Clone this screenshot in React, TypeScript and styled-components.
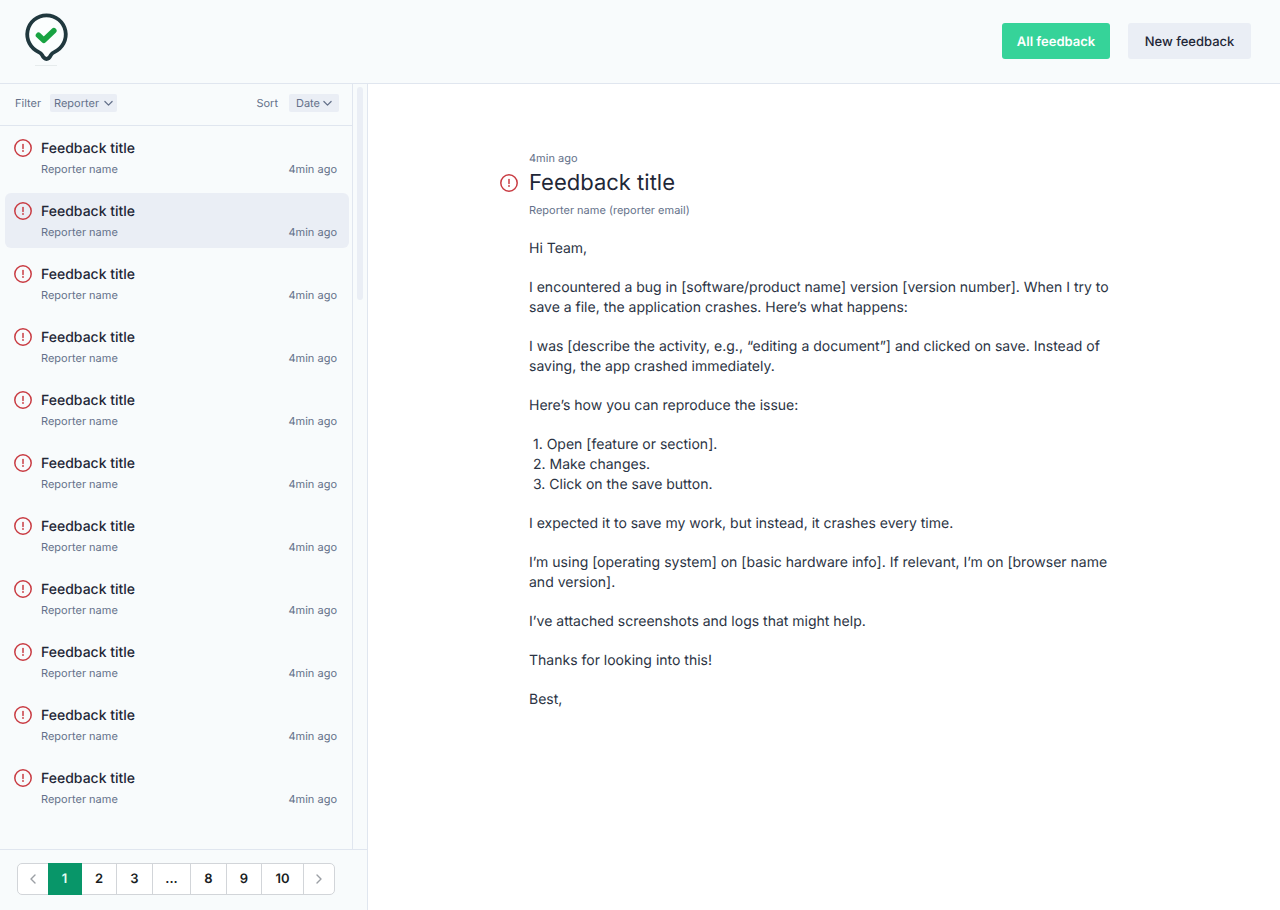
import React, { useState } from "react";
import styled, { createGlobalStyle } from "styled-components";

const color = {
  page: "#ffffff",
  panel: "#f8fbfc",
  line: "#e0e6ef",
  soft: "#eaeef5",
  ink: "#1f2737",
  body: "#2b3444",
  muted: "#64718a",
  green: "#36d399",
  deepGreen: "#089669",
  red: "#c93c43",
};

const GlobalStyle = createGlobalStyle`
  *, *::before, *::after { box-sizing: border-box; }
  body { margin: 0; background: ${color.page}; color: ${color.ink}; font-family: Inter, "Liberation Sans", sans-serif; text-rendering: geometricPrecision; }
  button, select { font-family: inherit; text-rendering: inherit; }
`;

const Page = styled.div`
  display: flex;
  flex-direction: column;
  min-height: 100vh;
`;

const Header = styled.header`
  display: flex;
  align-items: center;
  justify-content: space-between;
  height: 84px;
  padding: 0 29px 2px 16px;
  background: ${color.panel};
  border-bottom: 1px solid ${color.line};
`;

const LogoLink = styled.a`
  display: block;
  height: 60px;
  svg { display: block; }
`;

const HeaderActions = styled.nav`
  display: flex;
  gap: 18px;
`;

const ActionButton = styled.button<{ $primary?: boolean }>`
  height: 36px;
  padding: 2px 0 0;
  border: 0;
  border-radius: 3px;
  font-size: 13px;
  width: ${(p) => (p.$primary ? 108 : 123)}px;
  font-weight: ${(p) => (p.$primary ? 600 : 500)};
  color: ${(p) => (p.$primary ? "#ffffff" : color.ink)};
  background: ${(p) => (p.$primary ? color.green : color.soft)};
  cursor: pointer;
`;

const Workspace = styled.div`
  display: flex;
  flex: 1;
`;

const Sidebar = styled.aside`
  display: flex;
  flex-direction: column;
  flex: 0 0 368px;
  background: ${color.panel};
  border-right: 1px solid ${color.line};
`;

const ListArea = styled.div`
  display: flex;
  flex: 1;
`;

const ListColumn = styled.div`
  flex: 1;
  border-right: 1px solid ${color.line};
`;

const ScrollTrack = styled.div`
  width: 14px;
  padding: 3px 4px;
`;

const ScrollThumb = styled.div`
  height: 213px;
  border-radius: 3px;
  background: ${color.soft};
`;

const FilterBar = styled.div`
  display: flex;
  align-items: center;
  justify-content: space-between;
  height: 42px;
  padding: 0 13px 4px 15px;
  border-bottom: 1px solid ${color.line};
`;

const Field = styled.label<{ $gap: number }>`
  display: flex;
  align-items: center;
  gap: ${(p) => p.$gap}px;
  font-size: 11px;
  color: ${color.muted};
`;

const SelectBox = styled.span<{ $inset: number }>`
  position: relative;
  display: block;
  select { padding: 0 0 0 ${(p) => p.$inset}px; }
  svg {
    position: absolute;
    right: ${(p) => p.$inset}px;
    top: 5px;
    pointer-events: none;
  }
`;

const Select = styled.select<{ $width: number }>`
  display: block;
  appearance: none;
  width: ${(p) => p.$width}px;
  height: 18px;
  border: 0;
  border-radius: 2px;
  background: ${color.soft};
  color: inherit;
  font-size: 11px;
`;

const FeedbackList = styled.ul`
  display: flex;
  flex-direction: column;
  gap: 8px;
  margin: 0;
  padding: 4px 3px 4px 5px;
  list-style: none;
`;

const FeedbackRow = styled.button<{ $selected: boolean }>`
  display: flex;
  align-items: flex-start;
  gap: 9px;
  width: 100%;
  height: 55px;
  padding: 8px 12px 0 9px;
  border: 0;
  border-radius: 6px;
  background: ${(p) => (p.$selected ? color.soft : "transparent")};
  text-align: left;
  cursor: pointer;
  svg { flex: none; margin-top: 1px; }
`;

const RowText = styled.span`
  display: flex;
  flex: 1;
  flex-direction: column;
`;

const RowTitle = styled.span`
  font-size: 14px;
  line-height: 22px;
  font-weight: 500;
  color: ${color.ink};
`;

const RowMeta = styled.span`
  display: flex;
  justify-content: space-between;
  font-size: 11px;
  line-height: 18px;
  color: ${color.muted};
`;

const PagerBar = styled.footer`
  padding: 13px 17px 15px;
  border-top: 1px solid ${color.line};
`;

const Pager = styled.nav`
  display: inline-flex;
  height: 32px;
  border: 1px solid #d2d5d9;
  border-radius: 5px;
  background: ${color.page};
  vertical-align: top;
`;

const PageButton = styled.button<{ $current?: boolean; $width?: number }>`
  display: flex;
  align-items: center;
  justify-content: center;
  width: ${(p) => p.$width ?? 30}px;
  margin: ${(p) => (p.$current ? "-1px 0" : "0")};
  padding: 0;
  border: 0;
  border-right: 1px solid ${(p) => (p.$current ? color.deepGreen : "#d2d5d9")};
  background: ${(p) => (p.$current ? color.deepGreen : "transparent")};
  color: ${(p) => (p.$current ? "#e4fff5" : "#181c22")};
  font-size: 13px;
  font-weight: 600;
  cursor: pointer;
  &:first-child, &:last-child {
    border-right: 0;
    color: #9b9fa5;
  }
`;

const Main = styled.main`
  display: grid;
  grid-template-columns: 29px minmax(0, 590px) 29px;
  flex: 1;
  align-content: start;
  justify-content: center;
  padding: 66px 16px;
`;

const Meta = styled.p`
  grid-column: 2;
  margin: 0;
  font-size: 11px;
  line-height: 16px;
  color: ${color.muted};
`;

const TitleIcon = styled.span`
  grid-column: 1;
  display: flex;
  align-items: center;
`;

const Title = styled.h1`
  margin: 0;
  font-size: 22px;
  line-height: 34px;
  font-weight: 400;
`;

const Reporter = styled(Meta)`
  margin-top: 2px;
`;

const Message = styled.div`
  grid-column: 2;
  display: flex;
  flex-direction: column;
  gap: 19px;
  margin-top: 21px;
  font-size: 14px;
  line-height: 20px;
  color: ${color.body};
  p, ol { margin: 0; }
  ol { padding-left: 4px; list-style: none; }
`;

const Logo = () => (
  <svg width="60" height="60" viewBox="0 0 60 60" aria-hidden="true">
    <path
      d="M30.500 4.300a19.200 19.200 0 0 0-7.500 36.900c1.700.6 2.300 1.300 3 2.700.9 1.900 2.500 4.100 4.500 4.100s3.600-2.200 4.500-4.100c.7-1.400 1.300-2.100 3-2.700A19.200 19.200 0 0 0 30.500 4.300Z"
      fill="#fbfefe"
      stroke="#20383e"
      strokeWidth="3.800"
    />
    <path d="m22.500 24.300 5.300 5 10-9.500" fill="none" stroke="#18a342" strokeWidth="5.600" strokeLinecap="round" strokeLinejoin="round" />
    <path d="M19 54.500h22" stroke="#e6ebec" strokeWidth="1" />
  </svg>
);

const AlertIcon = () => (
  <svg width="18" height="18" viewBox="0 0 18 18" fill="none" stroke={color.red} aria-hidden="true">
    <circle cx="9" cy="9" r="8.200" strokeWidth="1.500" />
    <path d="M9 5.600v3.800" strokeWidth="1.500" strokeLinecap="round" />
    <circle cx="9" cy="12" r=".9" fill={color.red} stroke="none" />
  </svg>
);

const Chevron = ({ direction }: { direction: "down" | "left" | "right" }) => {
  const paths = { down: "M1 2.800 5 6.800l4-4", left: "M7 1 3 5l4 4", right: "m3 1 4 4-4 4" };
  const size = direction === "down" ? 9 : 10;
  return (
    <svg width={size} height={size} viewBox="0 0 10 10" fill="none" stroke="currentColor" strokeWidth="1.400" strokeLinecap="round" strokeLinejoin="round" aria-hidden="true">
      <path d={paths[direction]} />
    </svg>
  );
};

const feedback = Array.from({ length: 11 }, (_, id) => ({
  id,
  title: "Feedback title",
  reporter: "Reporter name",
  time: "4min ago",
}));

const pages = [
  { label: "1", width: 34 },
  { label: "2", width: 35 },
  { label: "3", width: 36 },
  { label: "...", width: 38 },
  { label: "8", width: 36 },
  { label: "9", width: 35 },
  { label: "10", width: 42 },
];

export default function App() {
  const [selected, setSelected] = useState(1);
  const [page, setPage] = useState("1");

  return (
    <Page>
      <GlobalStyle />
      <Header>
        <LogoLink href="#" aria-label="Home">
          <Logo />
        </LogoLink>
        <HeaderActions>
          <ActionButton $primary>All feedback</ActionButton>
          <ActionButton>New feedback</ActionButton>
        </HeaderActions>
      </Header>
      <Workspace>
        <Sidebar>
          <ListArea>
            <ListColumn>
              <FilterBar>
                <Field $gap={9}>
                  Filter
                  <SelectBox $inset={4}>
                    <Select $width={67}>
                      <option>Reporter</option>
                    </Select>
                    <Chevron direction="down" />
                  </SelectBox>
                </Field>
                <Field $gap={11}>
                  Sort
                  <SelectBox $inset={7}>
                    <Select $width={50}>
                      <option>Date</option>
                    </Select>
                    <Chevron direction="down" />
                  </SelectBox>
                </Field>
              </FilterBar>
              <FeedbackList>
                {feedback.map((item) => (
                  <li key={item.id}>
                    <FeedbackRow $selected={item.id === selected} onClick={() => setSelected(item.id)}>
                      <AlertIcon />
                      <RowText>
                        <RowTitle>{item.title}</RowTitle>
                        <RowMeta>
                          <span>{item.reporter}</span>
                          <span>{item.time}</span>
                        </RowMeta>
                      </RowText>
                    </FeedbackRow>
                  </li>
                ))}
              </FeedbackList>
            </ListColumn>
            <ScrollTrack>
              <ScrollThumb />
            </ScrollTrack>
          </ListArea>
          <PagerBar>
            <Pager aria-label="Pages">
              <PageButton aria-label="Previous page">
                <Chevron direction="left" />
              </PageButton>
              {pages.map(({ label, width }) => (
                <PageButton key={label} $current={label === page} $width={width} onClick={() => setPage(label)}>
                  {label}
                </PageButton>
              ))}
              <PageButton aria-label="Next page">
                <Chevron direction="right" />
              </PageButton>
            </Pager>
          </PagerBar>
        </Sidebar>
        <Main>
          <Meta>4min ago</Meta>
          <TitleIcon>
            <AlertIcon />
          </TitleIcon>
          <Title>Feedback title</Title>
          <Reporter>Reporter name (reporter email)</Reporter>
          <Message>
            <p>Hi Team,</p>
            <p>
              I encountered a bug in [software/product name] version [version number]. When I try to save a file, the
              application crashes. Here’s what happens:
            </p>
            <p>
              I was [describe the activity, e.g., “editing a document”] and clicked on save. Instead of saving, the app
              crashed immediately.
            </p>
            <p>Here’s how you can reproduce the issue:</p>
            <ol>
              <li>1. Open [feature or section].</li>
              <li>2. Make changes.</li>
              <li>3. Click on the save button.</li>
            </ol>
            <p>I expected it to save my work, but instead, it crashes every time.</p>
            <p>
              I’m using [operating system] on [basic hardware info]. If relevant, I’m on [browser name and version].
            </p>
            <p>I’ve attached screenshots and logs that might help.</p>
            <p>Thanks for looking into this!</p>
            <p>Best,</p>
          </Message>
        </Main>
      </Workspace>
    </Page>
  );
}
